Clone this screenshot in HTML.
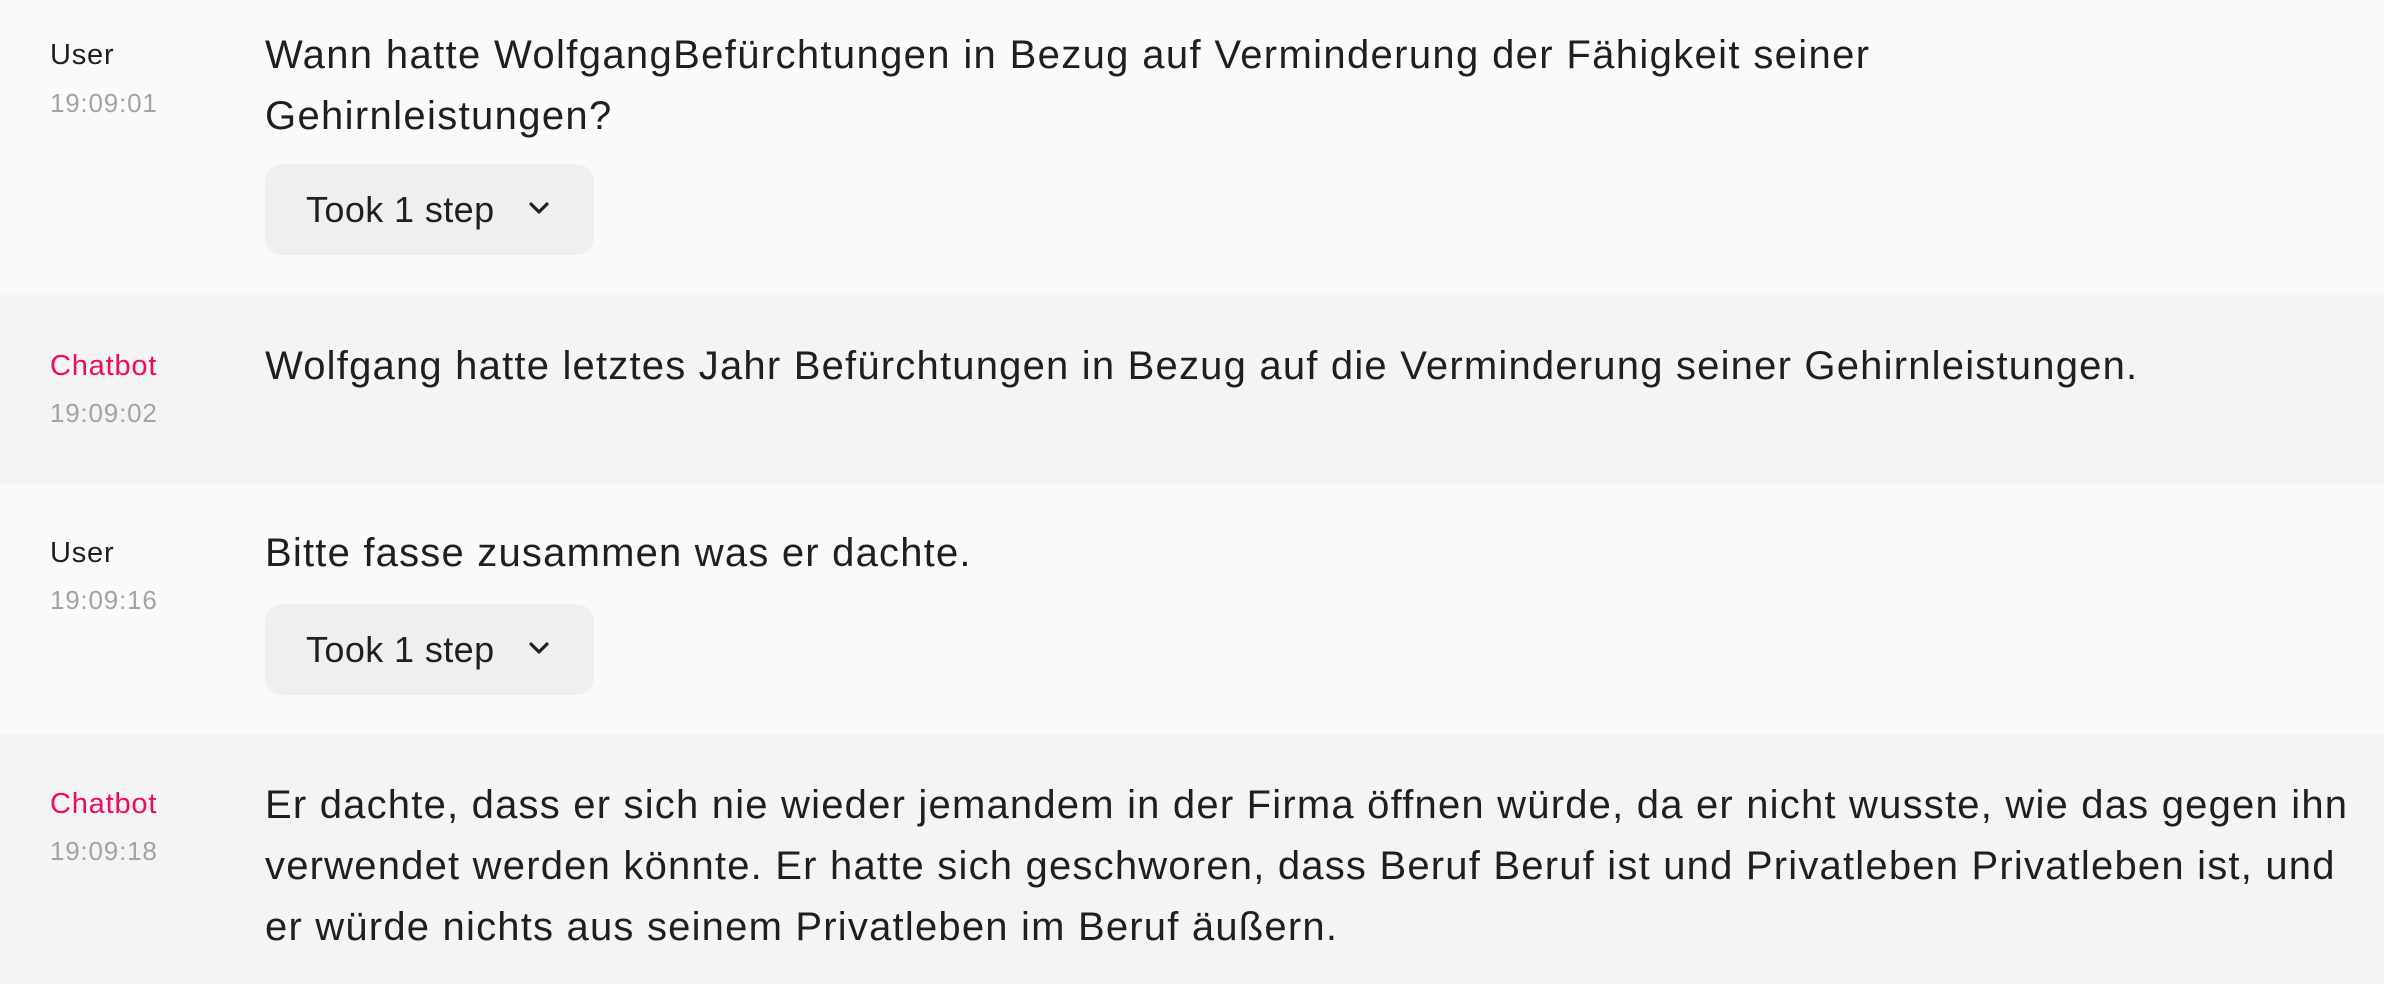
<!DOCTYPE html>
<html><head><meta charset="utf-8"><style>
*{margin:0;padding:0;box-sizing:border-box}
body{width:2384px;height:984px;overflow:hidden;font-family:"Liberation Sans",sans-serif;color:#1f1f1f}
.row{position:absolute;left:0;width:2384px}
.lab{position:absolute;left:50px;font-size:29px;line-height:34px;letter-spacing:0.8px}
.ts{position:absolute;left:50px;font-size:26px;color:#a3a3a3;line-height:30px;letter-spacing:0.8px}
.msg{position:absolute;left:265px;font-size:40px;line-height:61px;white-space:nowrap;letter-spacing:1.2px}
.btn{position:absolute;left:265px;width:329px;height:91px;background:#efefef;border-radius:18px}
.btn span{position:absolute;left:41px;top:0;line-height:91px;font-size:36px;letter-spacing:0.4px}
.pink{color:#f2085f}
</style></head><body>
<div class="row" style="top:0;height:295px;background:#fafafa">
 <div class="lab" style="top:38px">User</div>
 <div class="ts" style="top:88px">19:09:01</div>
 <div class="msg" style="top:25px;letter-spacing:1.35px">Wann hatte WolfgangBefürchtungen in Bezug auf Verminderung der Fähigkeit seiner<br>Gehirnleistungen?</div>
 <div class="btn" style="top:164px"><span>Took 1 step</span><svg style="position:absolute;left:262px;top:35px" width="24" height="20" viewBox="0 0 24 20"><polyline points="4,5 12,13 20,5" fill="none" stroke="#222" stroke-width="3.2" stroke-linecap="round" stroke-linejoin="round"/></svg></div>
</div>
<div class="row" style="top:295px;height:189px;background:#f4f4f4">
 <div class="lab pink" style="top:54px">Chatbot</div>
 <div class="ts" style="top:103px">19:09:02</div>
 <div class="msg" style="top:41px">Wolfgang hatte letztes Jahr Befürchtungen in Bezug auf die Verminderung seiner Gehirnleistungen.</div>
</div>
<div class="row" style="top:484px;height:250px;background:#fafafa">
 <div class="lab" style="top:52px">User</div>
 <div class="ts" style="top:101px">19:09:16</div>
 <div class="msg" style="top:39px">Bitte fasse zusammen was er dachte.</div>
 <div class="btn" style="top:120px"><span>Took 1 step</span><svg style="position:absolute;left:262px;top:35px" width="24" height="20" viewBox="0 0 24 20"><polyline points="4,5 12,13 20,5" fill="none" stroke="#222" stroke-width="3.2" stroke-linecap="round" stroke-linejoin="round"/></svg></div>
</div>
<div class="row" style="top:734px;height:250px;background:#f4f4f4">
 <div class="lab pink" style="top:53px">Chatbot</div>
 <div class="ts" style="top:102px">19:09:18</div>
 <div class="msg" style="top:41px">Er dachte, dass er sich nie wieder jemandem in der Firma öffnen würde, da er nicht wusste, wie das gegen ihn<br>verwendet werden könnte. Er hatte sich geschworen, dass Beruf Beruf ist und Privatleben Privatleben ist, und<br>er würde nichts aus seinem Privatleben im Beruf äußern.</div>
</div>
</body></html>
